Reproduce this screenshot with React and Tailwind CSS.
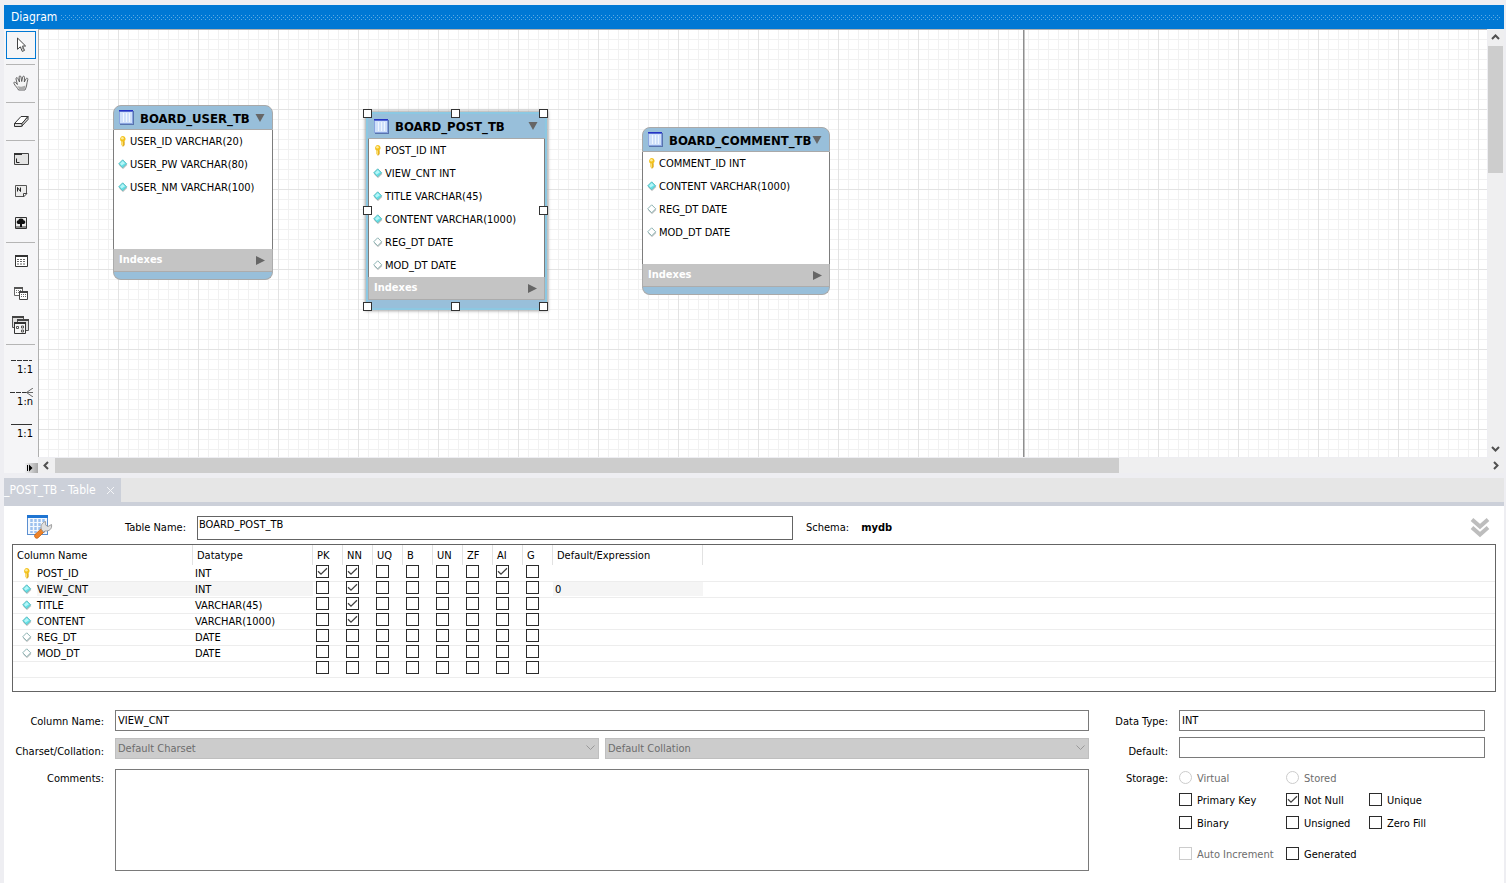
import { useState } from 'react';
import { clsx } from 'clsx';

const FLAGS = ['PK', 'NN', 'UQ', 'B', 'UN', 'ZF', 'AI', 'G'];

const COLUMNS = [
  { name: 'POST_ID', type: 'INT', kind: 'key', flags: ['PK', 'NN', 'AI'] },
  { name: 'VIEW_CNT', type: 'INT', kind: 'filled', flags: ['NN'], value: '0' },
  { name: 'TITLE', type: 'VARCHAR(45)', kind: 'filled', flags: ['NN'] },
  { name: 'CONTENT', type: 'VARCHAR(1000)', kind: 'filled', flags: ['NN'] },
  { name: 'REG_DT', type: 'DATE', kind: 'empty', flags: [] },
  { name: 'MOD_DT', type: 'DATE', kind: 'empty', flags: [] },
];

const ENTITIES = [
  {
    name: 'BOARD_USER_TB',
    place: 'left-[74px] top-[75px] w-[160px] h-[175px]',
    fields: [
      ['key', 'USER_ID VARCHAR(20)'],
      ['filled', 'USER_PW VARCHAR(80)'],
      ['filled', 'USER_NM VARCHAR(100)'],
    ],
  },
  {
    name: 'BOARD_POST_TB',
    place: 'left-[329px] top-[84px] w-[177px] h-[194px]',
    selected: true,
    fields: [
      ['key', 'POST_ID INT'],
      ['filled', 'VIEW_CNT INT'],
      ['filled', 'TITLE VARCHAR(45)'],
      ['filled', 'CONTENT VARCHAR(1000)'],
      ['empty', 'REG_DT DATE'],
      ['empty', 'MOD_DT DATE'],
    ],
  },
  {
    name: 'BOARD_COMMENT_TB',
    place: 'left-[603px] top-[97px] w-[188px] h-[168px]',
    fields: [
      ['key', 'COMMENT_ID INT'],
      ['filled', 'CONTENT VARCHAR(1000)'],
      ['empty', 'REG_DT DATE'],
      ['empty', 'MOD_DT DATE'],
    ],
  },
];

const HANDLES = [
  '-left-[5px] -top-[5px]',
  'left-[83px] -top-[5px]',
  '-right-[3px] -top-[5px]',
  '-left-[5px] top-[92px]',
  '-right-[3px] top-[92px]',
  '-left-[5px] -bottom-[3px]',
  'left-[83px] -bottom-[3px]',
  '-right-[3px] -bottom-[3px]',
];

function FieldIcon({ kind, className }) {
  if (kind === 'key') {
    return (
      <svg width="10" height="12" viewBox="0 0 10 12" className={clsx('shrink-0', className)}>
        <path d="M5 1a3 3 0 0 0-1.600 5.500V10L5 11.500 6.200 10V6.500A3 3 0 0 0 5 1z" fill="#f3c21b" />
        <path d="M4 6.500V10l.8.9V6.500z" fill="#fbe58a" />
        <circle cx="4.400" cy="3.200" r="1.300" fill="#fdeb9c" />
        <path d="M6.200 6.300V10L5 11.500" fill="none" stroke="#c98d12" strokeWidth=".7" />
      </svg>
    );
  }
  return (
    <svg width="10" height="12" viewBox="0 0 10 12" className={clsx('shrink-0', className)}>
      <path d="M5 2.600 9.400 7 5 11.200 1.200 7.400z" fill="#c9c9c9" />
      <path
        d="M4.700 1.800 8.700 5.800 4.700 9.800.7 5.800z"
        fill={kind === 'filled' ? '#62e0e6' : '#fff'}
        stroke={kind === 'filled' ? '#5fb9bd' : '#7fa9a9'}
        strokeWidth=".9"
      />
      {kind === 'filled' && <path d="M4.700 3 7 5.300 3.600 7.400 2 5.800z" fill="#b5f6f8" />}
    </svg>
  );
}

function CheckBox({ id, label, ...props }) {
  return (
    <span className="inline-grid h-[13px] w-[13px] shrink-0">
      <input
        id={id}
        type="checkbox"
        aria-label={label}
        className="peer col-start-1 row-start-1 h-[13px] w-[13px] appearance-none border border-[#2b2b2b] bg-white disabled:border-[#cccccc]"
        {...props}
      />
      <svg
        viewBox="0 0 13 13"
        className="pointer-events-none col-start-1 row-start-1 hidden h-[13px] w-[13px] peer-checked:block"
      >
        <path d="M2 6.200 5 9.200 11 3.200" fill="none" stroke="#404040" strokeWidth="1.300" />
      </svg>
    </span>
  );
}

function Entity({ name, place, fields, selected }) {
  return (
    <section
      className={clsx(
        'absolute flex flex-col',
        selected ? 'shadow-[0_0_0_2px_#8cc8e2,0_0_3px_3px_#a3a3a3]' : 'rounded-lg',
        place
      )}
    >
      <header
        className={clsx(
          'flex h-[25px] shrink-0 items-center border-b border-[#a9a9a9] bg-[#98bfda] pr-[7px]',
          selected ? 'pl-[6px]' : 'rounded-t-lg border-x border-t pl-[5px]'
        )}
      >
        <svg width="16" height="15" viewBox="0 0 16 15" className="shrink-0">
          <path d="M1 1h14v14H1z" fill="#5873ad" />
          <path d="M0 0h14v14H0z" fill="#8aa5e0" />
          <path d="M1 2h12v11H1z" fill="#cfe0fa" />
          <path d="M0 0h14v1.500H0z" fill="#2433c4" />
          <path d="M4.500 3v9M7.500 3v9M10.500 3v9" stroke="#eff6ff" />
        </svg>
        <h2 className="ml-[5px] flex-1 pt-[2px] text-[13px] leading-4 font-bold whitespace-nowrap">{name}</h2>
        <svg width="10" height="8" viewBox="0 0 10 8" className="shrink-0">
          <path d="M.5 0h9L5 8z" fill="#666" />
        </svg>
      </header>
      <ul className="flex-1 border-x border-[#7d7d7d] bg-white">
        {fields.map(([kind, text]) => (
          <li key={text} className="flex h-[23px] items-center gap-[2px] pl-1 text-[11px] whitespace-nowrap">
            <FieldIcon kind={kind} className="mb-[2px]" />
            <span className="pt-[2px]">{text}</span>
          </li>
        ))}
      </ul>
      <div className="flex h-[23px] shrink-0 items-center justify-between border-x border-b border-[#acacac] bg-[#c4c4c4] pr-[7px] pl-[5px] text-[11px] font-bold text-white">
        <span className="pt-px">Indexes</span>
        <svg width="9" height="9" viewBox="0 0 9 9">
          <path d="M0 0v9l9-4.500z" fill="#666" />
        </svg>
      </div>
      <div
        className={clsx(
          'h-2 shrink-0 bg-[#98bfda]',
          !selected && 'rounded-b-lg border-x border-b border-[#a9a9a9]'
        )}
      />
      {selected &&
        HANDLES.map((pos) => (
          <span key={pos} className={clsx('absolute h-[9px] w-[9px] border border-[#333] bg-white', pos)} />
        ))}
    </section>
  );
}

/* Toolbar icons */

const PointerIcon = () => (
  <svg width="20" height="20" viewBox="0 0 20 20">
    <path d="M6.500 3v11.300l2.800-2.500 2 4.600 2.200-1-2-4.400h3.100z" fill="#fff" stroke="#444" />
    <path d="M10.500 12l1.600 3.600 1-.4-1.800-4" fill="#888" />
  </svg>
);

const HandIcon = () => (
  <svg width="20" height="20" viewBox="0 0 20 20">
    <path
      d="M7.500 17c-1-2.500-3.500-4-4.500-6.500-.6-1.300.8-1.900 1.600-1l1.800 2L5 6c-.3-1.500 1.300-1.900 1.800-.6L8.500 9 8.100 4c0-1.500 1.700-1.500 1.900 0l.7 4.500L11.700 4c.3-1.300 1.900-1 1.800.4L13.300 9l1.800-3.300c.6-1.100 2-.4 1.700.8-.7 2.500-.9 4-1.300 6.500-.3 1.800-1 2.500-1.500 4z"
      fill="#f4f4f4"
      stroke="#555"
      strokeWidth=".9"
    />
    <path d="M8.500 17c-.6-1.500-1.500-3.100-2.200-4 3 1 5.500 1 8.200-.4-.2 1.700-.8 3.100-1.200 4.400z" fill="#aaa" />
  </svg>
);

const EraserIcon = () => (
  <svg width="20" height="20" viewBox="0 0 20 20">
    <path d="M3.500 12.500 10 5.500h7L11 12.500z" fill="#fff" stroke="#333" />
    <path d="M3.500 12.500v3h7L17 8.500v-3l-6 7z" fill="#ddd" stroke="#333" />
    <path d="M11 12.500v3" stroke="#333" />
  </svg>
);

const LayerIcon = () => (
  <svg width="20" height="20" viewBox="0 0 20 20">
    <path d="M3.500 4.500h14v11h-14z" fill="#e4e4e4" stroke="#444" />
    <path d="M3 4h8v2H3z" fill="#333" />
    <path d="M5.500 9.500v4h3" fill="none" stroke="#222" />
  </svg>
);

const NoteIcon = () => (
  <svg width="20" height="20" viewBox="0 0 20 20">
    <path d="M4.500 4.500h11v8l-3 3h-8z" fill="#ececec" stroke="#555" />
    <path d="M16 12.500h-3.500V16z" fill="#fff" stroke="#444" />
    <path d="M6.500 10.500v-4l3 4v-4" fill="none" stroke="#222" />
  </svg>
);

const ImageIcon = () => (
  <svg width="20" height="20" viewBox="0 0 20 20">
    <path d="M4.500 4.500h11v11h-11z" fill="#eee" stroke="#333" />
    <path d="M5 13h10v2H5z" fill="#8a8a8a" />
    <path
      d="M10 5.500c2 0 2.500 1 2.500 1.800 1.600.2 2 1.400 1.700 2.500-.3 1-1.300 1.400-3.200 1.200V14H9v-3c-1.900.2-2.900-.2-3.200-1.200-.3-1.100.1-2.300 1.700-2.500 0-.8.5-1.800 2.500-1.800z"
      fill="#111"
    />
  </svg>
);

const TableIcon = () => (
  <svg width="20" height="20" viewBox="0 0 20 20">
    <path d="M4.500 4.500h12v11h-12z" fill="#fff" stroke="#333" />
    <path d="M4 4h13v2H4z" fill="#333" />
    <path d="M6 8.500h9M6 10.500h9M6 13h9" stroke="#666" strokeDasharray="2 1" />
  </svg>
);

const ViewIcon = () => (
  <svg width="20" height="20" viewBox="0 0 20 20">
    <path d="M3.500 4.500h8v8h-8z" fill="#fff" stroke="#666" />
    <path d="M3 4h9v2H3z" fill="#555" />
    <path d="M5 7.500h6M5 9.500h3" stroke="#777" strokeDasharray="1 1" />
    <path d="M8.500 8.500h8v8h-8z" fill="#fff" stroke="#444" />
    <path d="M8 8h9v2H8z" fill="#444" />
    <path d="M10 11.500h6M10 13.500h6" stroke="#666" strokeDasharray="1 1" />
  </svg>
);

const RoutineIcon = () => (
  <svg width="20" height="20" viewBox="0 0 20 20">
    <path d="M1.500 1.500h11v11h-11z" fill="#e0e0e0" stroke="#555" />
    <path d="M1 1h12v2H1z" fill="#444" />
    <path d="M6.500 4.500h11v11h-11z" fill="#e0e0e0" stroke="#555" />
    <path d="M6 4h12v2H6z" fill="#444" />
    <path d="M3.500 7.500h11v11h-11z" fill="#f6f6f6" stroke="#333" />
    <path d="M3 7h12v2H3z" fill="#333" />
    <path d="M5.500 11.500h2v2h-2zM10.500 11h2v2h-2zM10.500 15h2v2h-2z" fill="#fff" stroke="#444" strokeWidth=".9" />
  </svg>
);

const TOOLS = [
  [{ label: 'Select', Icon: PointerIcon }],
  [{ label: 'Pan', Icon: HandIcon }],
  [{ label: 'Eraser', Icon: EraserIcon }],
  [
    { label: 'Layer', Icon: LayerIcon },
    { label: 'Note', Icon: NoteIcon },
    { label: 'Image', Icon: ImageIcon },
  ],
  [
    { label: 'Table', Icon: TableIcon },
    { label: 'View', Icon: ViewIcon },
    { label: 'Routine group', Icon: RoutineIcon },
  ],
];

const RELATIONS = [
  { id: 'non-identifying-one', text: '1:1', line: 'M1 4.500h21', dash: '5 1' },
  { id: 'non-identifying-many', text: '1:n', line: 'M0 4.500h17', dash: '5 1', fork: true },
  { id: 'identifying-one', text: '1:1', line: 'M1 4.500h21' },
];

function Toolbar() {
  const [active, setActive] = useState('Select');
  return (
    <nav className="flex w-[34px] shrink-0 flex-col bg-[#f5f5f7]">
      <div className="flex flex-1 flex-col gap-1 px-[2px] pt-[2px]">
        {TOOLS.map((group) => (
          <div key={group[0].label} className="flex flex-col gap-1">
            {group.map(({ label, Icon }) => (
              <button
                key={label}
                aria-label={label}
                onClick={() => setActive(label)}
                className={clsx(
                  'flex h-7 w-[30px] items-center justify-center border',
                  active === label ? 'border-[#0078d4]' : 'border-transparent'
                )}
              >
                <Icon />
              </button>
            ))}
            <div className="h-[2px] w-[29px] border-b border-[#b5b5b5]" />
          </div>
        ))}
        {RELATIONS.map(({ id, text, line, dash, fork }) => (
          <button key={id} aria-label={id} className="flex h-7 w-[27px] flex-col items-end pt-[7px]">
            <svg width="23" height="9" viewBox="0 0 23 9" className="shrink-0">
              <path d={line} stroke="#333" strokeDasharray={dash} />
              {fork && <path d="M23 0 16.500 4.500 23 9M16.500 4.500H23" fill="none" stroke="#666" />}
            </svg>
            <span className="text-[11px] leading-[10px]">{text}</span>
          </button>
        ))}
      </div>
      <button
        aria-label="Expand toolbar"
        className="flex h-[10px] items-center justify-end bg-linear-to-r from-[#f5f5f7] from-60% to-[#a8a8a8] pr-1"
      >
        <svg width="8" height="8" viewBox="0 0 8 8">
          <path d="M1.500 1v6" stroke="#000" />
          <path d="M3 .5v7L6.500 4z" fill="#000" />
        </svg>
      </button>
    </nav>
  );
}

function ScrollArrow({ d, label, className }) {
  return (
    <button aria-label={label} className={clsx('flex shrink-0 items-center justify-center', className)}>
      <svg width="9" height="9" viewBox="0 0 9 9">
        <path d={d} fill="none" stroke="#505050" strokeWidth="2" />
      </svg>
    </button>
  );
}

function Diagram() {
  return (
    <section className="flex flex-1 flex-col">
      <header className="flex h-6 shrink-0 items-center gap-1 bg-[#0078d4] pr-[3px] pl-[7px]">
        <h1 className="text-[12px] text-white">Diagram</h1>
        <svg className="h-[5px] flex-1" aria-hidden="true">
          <defs>
            <pattern id="grip" width="4" height="4" patternUnits="userSpaceOnUse">
              <path d="M0 0h1v1H0zM2 2h1v1H2z" fill="#5fabe4" />
            </pattern>
          </defs>
          <rect width="100%" height="5" fill="url(#grip)" />
        </svg>
      </header>
      <div className="flex flex-1">
        <Toolbar />
        <div className="flex min-w-0 flex-1 flex-col">
          <div className="flex flex-1">
            <div className="relative min-h-[400px] flex-1 overflow-hidden border-t border-l border-[#b0b0b0] bg-white bg-[linear-gradient(to_right,#e3e3e3_1px,transparent_1px),linear-gradient(#e3e3e3_1px,transparent_1px),linear-gradient(to_right,#f1f1f1_1px,transparent_1px),linear-gradient(#f1f1f1_1px,transparent_1px)] bg-[size:80px_80px,80px_80px,10px_10px,10px_10px] bg-[position:-1px_-1px]">
              {/* page boundary */}
              <div className="absolute inset-y-0 left-[984px] w-[2px] border-l border-[#8f8f8f] bg-[#c4c4c4]" />
              {ENTITIES.map((entity) => (
                <Entity key={entity.name} {...entity} />
              ))}
            </div>
            <div className="ml-px flex w-4 flex-col bg-[#efeff0]">
              <ScrollArrow label="Scroll up" className="h-[17px] w-[15px]" d="M1 6 4.500 2.500 8 6" />
              <div className="h-[127px] w-[15px] bg-[#cdcdcd]" />
              <div className="flex-1" />
              <ScrollArrow label="Scroll down" className="h-[17px] w-[15px]" d="M1 3 4.500 6.500 8 3" />
            </div>
          </div>
          <div className="mt-px flex h-[15px] bg-[#efeff0]">
            <ScrollArrow label="Scroll left" className="w-[17px]" d="M6 1 2.500 4.500 6 8" />
            <div className="flex flex-1">
              <div className="w-[74.3%] bg-[#cdcdcd]" />
            </div>
            <ScrollArrow label="Scroll right" className="w-[17px]" d="M3 1 6.500 4.500 3 8" />
          </div>
        </div>
      </div>
    </section>
  );
}

function ColumnGrid() {
  return (
    <div className="mx-2 h-[148px] border border-[#646464] bg-white">
      <table className="w-full table-fixed border-collapse text-left text-[11px] leading-[15px]">
        <colgroup>
          <col className="w-[180px]" />
          <col className="w-[120px]" />
          {FLAGS.map((flag) => (
            <col key={flag} className="w-[30px]" />
          ))}
          <col className="w-[150px]" />
          <col />
        </colgroup>
        <thead>
          <tr className="h-5">
            {['Column Name', 'Datatype', ...FLAGS, 'Default/Expression'].map((head) => (
              <th
                key={head}
                scope="col"
                className="p-0 pl-1 font-normal whitespace-nowrap shadow-[inset_-1px_0_#e2e2e2]"
              >
                {head}
              </th>
            ))}
            <td />
          </tr>
        </thead>
        <tbody>
          {[...COLUMNS, { name: '', type: '', flags: [] }].map((col) => {
            const fill = clsx('h-[14px] leading-4', col.name === 'VIEW_CNT' && 'bg-[#f5f5f5]');
            return (
              <tr key={col.name} className="h-4 bg-[linear-gradient(#ededed_1px,transparent_1px)] first:bg-none">
                <td className="p-0">
                  <div className="flex h-[15px] items-center gap-[5px] pl-[9px]">
                    {col.kind && <FieldIcon kind={col.kind} />}
                    <span className={clsx('flex-1', fill)}>{col.name}</span>
                  </div>
                </td>
                <td className="p-0">
                  <div className={clsx('pl-[2px]', fill)}>{col.type}</div>
                </td>
                {FLAGS.map((flag) => (
                  <td key={flag} className="p-0 align-top">
                    <div className="flex h-4 items-start pl-[3px]">
                      <CheckBox label={`${col.name} ${flag}`} defaultChecked={col.flags.includes(flag)} />
                    </div>
                  </td>
                ))}
                <td className="p-0">
                  <div className={clsx('pl-[2px]', fill)}>{col.value}</div>
                </td>
                <td />
              </tr>
            );
          })}
        </tbody>
      </table>
      <div className="h-px bg-[#ededed]" />
    </div>
  );
}

const inputClass = 'h-[21px] w-full border border-[#7a7a7a] bg-white px-[2px] text-[11px] outline-none';

function CharsetSelect({ label }) {
  return (
    <span className="grid flex-1 items-center">
      <select
        disabled
        aria-label={label}
        className="col-start-1 row-start-1 h-[21px] w-full appearance-none border border-[#bfbfbf] bg-[#cccccc] px-[2px] pt-px text-[11px] text-[#6d6d6d] opacity-100"
      >
        <option>{label}</option>
      </select>
      <svg
        width="9"
        height="6"
        viewBox="0 0 9 6"
        className="pointer-events-none col-start-1 row-start-1 mr-1 justify-self-end"
      >
        <path d="M.5.500 4.500 4.500 8.500.500" fill="none" stroke="#999" />
      </svg>
    </span>
  );
}

function Option({ id, text, disabled, ...props }) {
  return (
    <div className="flex h-[13px] items-center gap-[5px]">
      <CheckBox id={id} disabled={disabled} {...props} />
      <label htmlFor={id} className={clsx('pt-[2px] whitespace-nowrap', disabled && 'text-[#6d6d6d]')}>
        {text}
      </label>
    </div>
  );
}

function StorageRadio({ id, text }) {
  return (
    <div className="flex h-[13px] items-center gap-[5px]">
      <input
        id={id}
        type="radio"
        name="storage"
        disabled
        className="h-[13px] w-[13px] shrink-0 appearance-none rounded-full border border-[#cccccc] bg-white"
      />
      <label htmlFor={id} className="pt-[2px] text-[#6d6d6d]">
        {text}
      </label>
    </div>
  );
}

function ColumnDetails() {
  return (
    <form className="flex pt-[18px] pr-[19px] pb-3 text-[11px] leading-[14px]">
      <div className="grid flex-1 grid-cols-[100px_1fr] content-start gap-x-[11px]">
        <label htmlFor="column-name" className="pt-[5px] text-right">
          Column Name:
        </label>
        <input id="column-name" className={inputClass} defaultValue="VIEW_CNT" />
        <span className="pt-[14px] text-right">Charset/Collation:</span>
        <div className="flex gap-[6px] pt-[6px]">
          <CharsetSelect label="Default Charset" />
          <CharsetSelect label="Default Collation" />
        </div>
        <label htmlFor="comments" className="pt-[13px] text-right">
          Comments:
        </label>
        <textarea
          id="comments"
          className="mt-[10px] h-[102px] w-full resize-none border border-[#7a7a7a] bg-white outline-none"
        />
      </div>
      <div className="grid w-[396px] grid-cols-[79px_306px] content-start gap-x-[11px]">
        <label htmlFor="data-type" className="pt-[5px] text-right">
          Data Type:
        </label>
        <input id="data-type" className={inputClass} defaultValue="INT" />
        <label htmlFor="default-value" className="pt-[14px] text-right">
          Default:
        </label>
        <div className="pt-[6px]">
          <input id="default-value" className={inputClass} />
        </div>
        <span className="pt-[13px] text-right">Storage:</span>
        <div className="grid grid-cols-[107px_83px_1fr] pt-3">
          <StorageRadio id="virtual" text="Virtual" />
          <StorageRadio id="stored" text="Stored" />
          <span />
          <div className="col-span-3 grid grid-cols-subgrid gap-y-[10px] pt-[9px]">
            <Option id="pk" text="Primary Key" />
            <Option id="nn" text="Not Null" defaultChecked />
            <Option id="uq" text="Unique" />
            <Option id="bin" text="Binary" />
            <Option id="un" text="Unsigned" />
            <Option id="zf" text="Zero Fill" />
          </div>
          <div className="col-span-3 grid grid-cols-subgrid pt-[18px]">
            <Option id="ai" text="Auto Increment" disabled />
            <Option id="gen" text="Generated" />
          </div>
        </div>
      </div>
    </form>
  );
}

function TableEditor() {
  return (
    <section className="mt-[5px] bg-white">
      <div className="flex h-6 bg-[#e6e6e6]">
        <div className="flex w-[117px] items-center justify-between bg-[#ccd0d9] pr-[6px] text-[12px] text-white">
          <span className="whitespace-nowrap">_POST_TB - Table</span>
          <button aria-label="Close tab">
            <svg width="9" height="9" viewBox="0 0 9 9">
              <path d="M1 1l7 7M8 1 1 8" stroke="#f4f5f7" />
            </svg>
          </button>
        </div>
      </div>
      <div className="h-1 bg-[#ccd0d9]" />

      <div className="flex h-[38px] items-center pt-[5px] pr-[14px] pl-[22px] text-[11px]">
        <svg width="27" height="27" viewBox="0 0 27 27" className="shrink-0">
          <path d="M1 1h21v20H1z" fill="#5b8fd0" />
          <path d="M2 4h19v16H2z" fill="#f3f8fe" />
          <path d="M1 1h21v3H1z" fill="#1e74d2" />
          <path d="M5.500 5v14M9.500 5v14M13.500 5v14M17.500 5v14" stroke="#9cc0ee" strokeWidth="2.500" />
          <path d="M3 8.500h17M3 12.500h17M3 16.500h17" stroke="#f3f8fe" />
          <path
            d="M16 14 9 20.500c-1.500 2 1 5 3.200 3.200L19 17z"
            fill="#ee8328"
            stroke="#c4600f"
            strokeWidth=".8"
          />
          <path
            d="M15.500 15.500c-1.500-3.500.5-7 4-8l.2 3.600 2.300 1.400 3.500-2c.8 4-2 7-6.500 6.500l-1.500 1.200z"
            fill="#e0e0e0"
            stroke="#8c8c8c"
            strokeWidth=".8"
          />
        </svg>
        <label htmlFor="table-name" className="w-[133px] pt-[2px] text-right whitespace-nowrap">
          Table Name:
        </label>
        <input
          id="table-name"
          className="ml-[11px] h-6 w-[596px] border border-[#646464] bg-white px-px pb-[6px] text-[11px] outline-none"
          defaultValue="BOARD_POST_TB"
        />
        <span className="ml-[13px] pt-[2px]">Schema:</span>
        <strong className="ml-3 flex-1 pt-[2px]">mydb</strong>
        <button aria-label="Collapse header">
          <svg width="20" height="22" viewBox="0 0 20 22">
            <path d="M2 2.500l8 7 8-7M2 10.500l8 7 8-7" fill="none" stroke="#bdbdbd" strokeWidth="4" />
          </svg>
        </button>
      </div>
      <ColumnGrid />
      <ColumnDetails />
    </section>
  );
}

export default function App() {
  return (
    <main className="flex min-h-screen flex-col bg-[#eeeef2] pt-[5px] pr-[2px] pl-1 font-['DejaVu_Sans_Condensed','Noto_Sans',sans-serif] text-black">
      <Diagram />
      <TableEditor />
    </main>
  );
}
